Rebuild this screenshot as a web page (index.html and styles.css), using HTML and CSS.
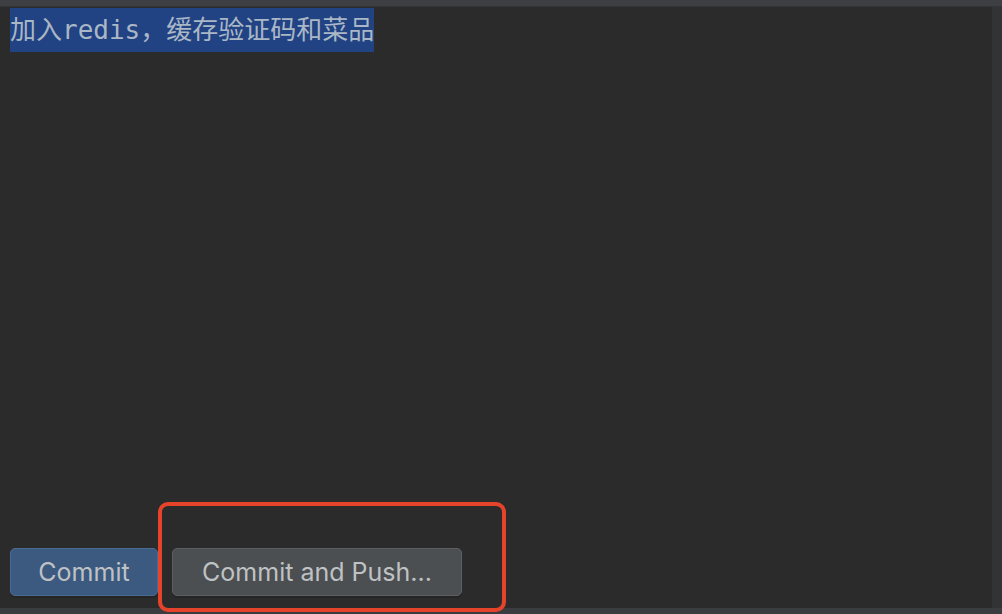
FILE: index.html
```html
<!DOCTYPE html>
<html>
<head>
<meta charset="utf-8">
<link rel="stylesheet" href="styles.css">
</head>
<body>
<div class="window">
  <div class="topbar"></div>
  <div class="middle">
    <div class="editor">
      <div class="message"><span class="sel">加入redis，缓存验证码和菜品</span></div>
      <div class="actions">
        <button class="btn primary">Commit</button>
        <button class="btn secondary">Commit and Push...</button>
        <div class="highlight-box"></div>
      </div>
    </div>
    <div class="scrollbar"></div>
  </div>
  <div class="bottombar"></div>
</div>
</body>
</html>
```
FILE: styles.css
```css
html, body {
  margin: 0;
  padding: 0;
  background: #2b2b2b;
}
.window {
  width: 1002px;
  height: 614px;
  display: flex;
  flex-direction: column;
  overflow: hidden;
}
.topbar {
  height: 6px;
  background: #3d3f42;
  border-bottom: 1px solid #343537;
  flex: none;
}
.middle {
  flex: 1;
  display: flex;
  min-height: 0;
}
.editor {
  flex: 1;
  background: #2b2b2b;
  display: flex;
  flex-direction: column;
  justify-content: space-between;
  padding: 1px 0 12px 10px;
}
.scrollbar {
  width: 10px;
  flex: none;
  background: #313335;
}
.bottombar {
  height: 6px;
  flex: none;
  background: #3a3c3f;
}
.message {
  font-family: "DejaVu Sans Mono", "Noto Sans CJK SC", monospace;
  font-size: 26px;
  line-height: 44px;
  height: 44px;
  color: #a9b7c6;
}
.sel {
  background: #214283;
  display: inline-block;
  height: 44px;
}
.actions {
  position: relative;
  display: flex;
  gap: 14px;
  align-items: flex-end;
}
.btn {
  height: 48px;
  border-radius: 5px;
  font-family: Inter, "Liberation Sans", sans-serif;
  font-size: 25px;
  color: #bfc2c5;
  padding: 0;
  box-shadow: 0 2px 0 #252526;
  cursor: default;
}
.primary {
  width: 148px;
  background: #3c5a80;
  border: 1px solid #4b6a91;
}
.secondary {
  width: 290px;
  background: #4c4f51;
  border: 1px solid #5c5f61;
}
.highlight-box {
  position: absolute;
  left: 148px;
  top: -46px;
  width: 340px;
  height: 102px;
  border: 4px solid #e6432b;
  border-radius: 10px;
  pointer-events: none;
}
```
